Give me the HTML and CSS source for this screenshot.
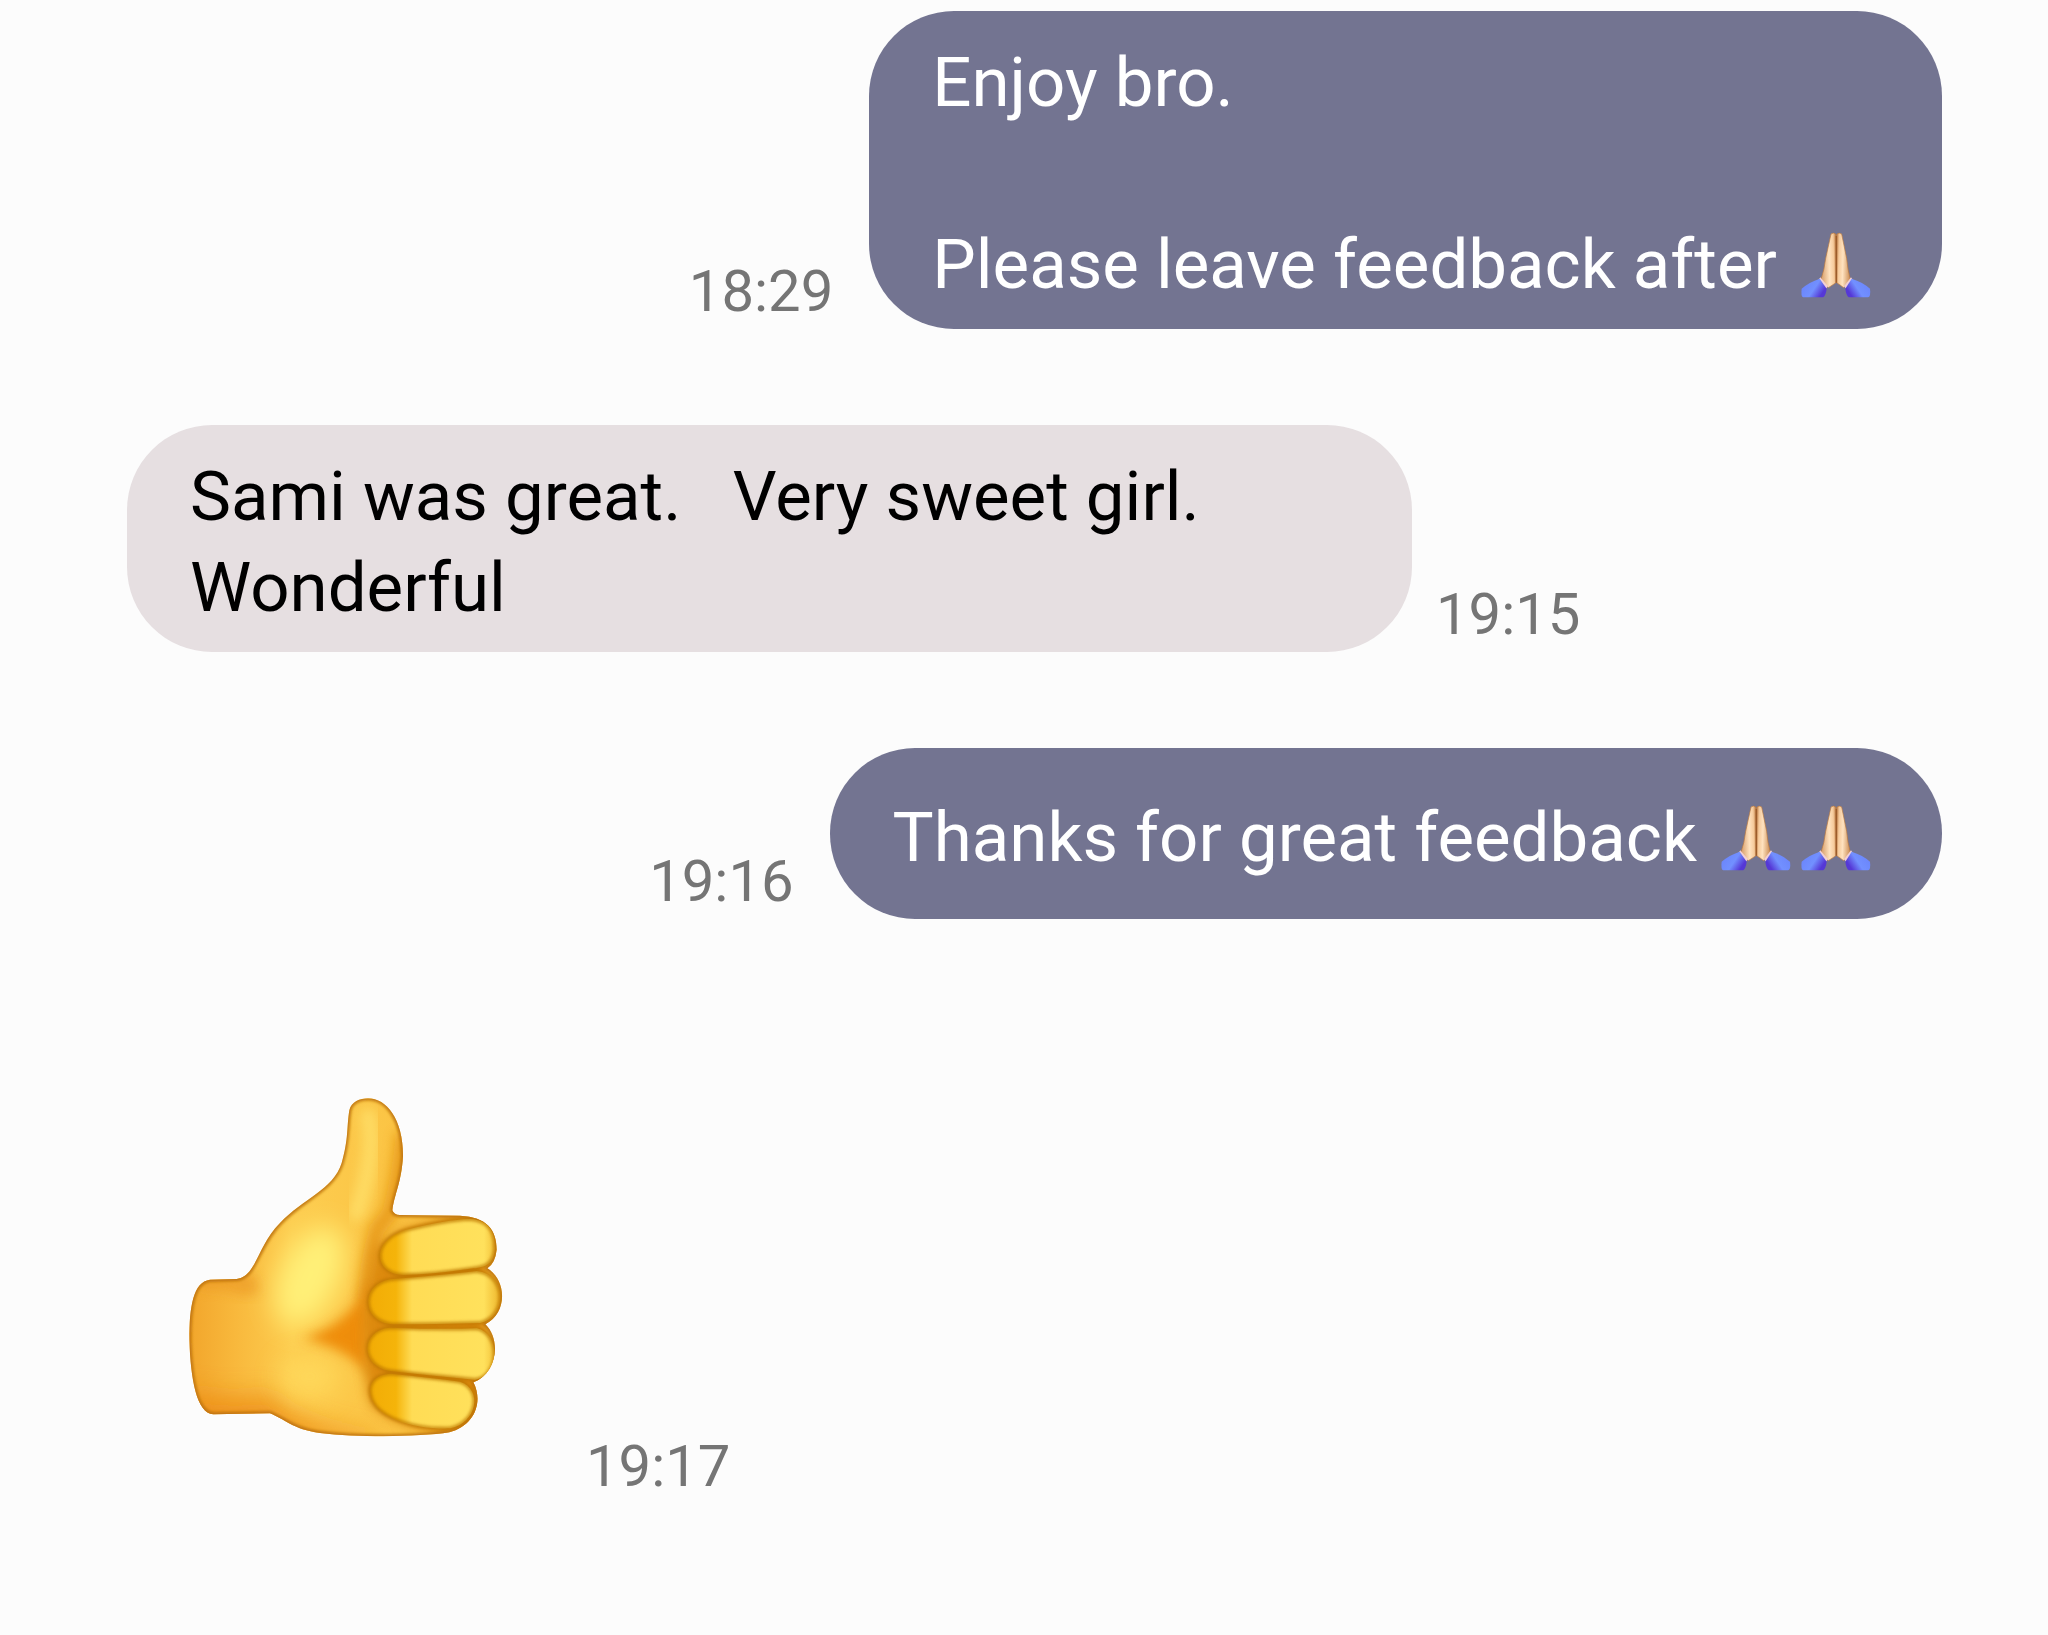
FILE: index.html
```html
<!DOCTYPE html>
<html lang="en">
<head>
<meta charset="utf-8">
<meta name="viewport" content="width=device-width, initial-scale=1">
<title>Messages</title>
<link rel="stylesheet" href="styles.css">
</head>
<body>
<svg class="defs" aria-hidden="true">
  <defs>
    <linearGradient id="handL" x1="0" x2="1" y1=".1" y2="0">
      <stop offset="0" stop-color="#dba472"/>
      <stop offset=".5" stop-color="#ffe2bf"/>
      <stop offset=".8" stop-color="#f6cb9c"/>
      <stop offset="1" stop-color="#b8743c"/>
    </linearGradient>
    <linearGradient id="handR" x1="1" x2="0" y1=".1" y2="0">
      <stop offset="0" stop-color="#d0955f"/>
      <stop offset=".5" stop-color="#ffe2bf"/>
      <stop offset=".8" stop-color="#f6cb9c"/>
      <stop offset="1" stop-color="#b8743c"/>
    </linearGradient>
    <linearGradient id="cuffL" x1="0" x2="1" y1=".3" y2=".8">
      <stop offset="0" stop-color="#6a84fb"/>
      <stop offset=".5" stop-color="#7290ff"/>
      <stop offset=".85" stop-color="#5538d6"/>
    </linearGradient>
    <linearGradient id="cuffR" x1="1" x2="0" y1=".3" y2=".8">
      <stop offset="0" stop-color="#6a84fb"/>
      <stop offset=".5" stop-color="#7290ff"/>
      <stop offset=".85" stop-color="#5538d6"/>
    </linearGradient>
    <symbol id="pray" viewBox="54 33 240 204">
      <path d="M153 42Q161 36 168 43L168 188Q156 196 145 203L123 178Q133 150 137 115Z" fill="url(#handL)" stroke="#b87940" stroke-width="2"/>
      <path d="M185 42Q177 36 170 43L170 188Q182 196 191 203L211 178Q203 150 200 115Z" fill="url(#handR)" stroke="#b87940" stroke-width="2"/>
      <path d="M169 48V188" stroke="#9c5c2b" stroke-width="4"/>
      <path d="M121 172L144 199L137 207L115 180ZM213 172L192 199L199 207L219 180Z" fill="#f1cfd6"/>
      <path d="M119 176L140 206Q138 224 130 232H70Q62 230 65 206Q88 186 119 176Z" fill="url(#cuffL)"/>
      <path d="M215 176L196 206Q198 224 206 232H264Q273 230 270 206Q248 186 215 176Z" fill="url(#cuffR)"/>
    </symbol>
  </defs>
</svg>

<main class="thread">
  <article class="row sent">
    <time class="time">18:29</time>
    <p class="bubble">Enjoy bro.

Please leave feedback after <span class="emojis"><svg class="emoji" role="img" aria-label="Folded hands"><use href="#pray"/></svg></span></p>
  </article>

  <article class="row received">
    <p class="bubble">Sami was great.   Very sweet girl. Wonderful</p>
    <time class="time">19:15</time>
  </article>

  <article class="row sent">
    <time class="time">19:16</time>
    <p class="bubble">Thanks for great feedback <span class="emojis"><svg class="emoji" role="img" aria-label="Folded hands"><use href="#pray"/></svg><svg class="emoji" role="img" aria-label="Folded hands"><use href="#pray"/></svg></span></p>
  </article>

  <article class="row received">
    <svg class="sticker" viewBox="0 0 1140 1200" role="img" aria-label="Thumbs up">
      <defs>
        <filter id="b6" x="-20%" y="-20%" width="140%" height="140%"><feGaussianBlur stdDeviation="5"/></filter>
        <filter id="b12" x="-50%" y="-30%" width="200%" height="160%"><feGaussianBlur stdDeviation="18"/></filter>
        <filter id="b30" x="-80%" y="-80%" width="260%" height="260%"><feGaussianBlur stdDeviation="40"/></filter>
        <linearGradient id="skin" x1="90" x2="700" y1="0" y2="0" gradientUnits="userSpaceOnUse">
          <stop offset="0" stop-color="#f2a62c"/>
          <stop offset=".22" stop-color="#f8b83c"/>
          <stop offset=".5" stop-color="#fdcd50"/>
          <stop offset="1" stop-color="#fbc444"/>
        </linearGradient>
        <linearGradient id="finger" x1="620" x2="1020" y1="0" y2="0" gradientUnits="userSpaceOnUse">
          <stop offset="0" stop-color="#f2ab05"/>
          <stop offset=".22" stop-color="#f5b40a"/>
          <stop offset=".34" stop-color="#ffdc55"/>
          <stop offset=".88" stop-color="#ffe15c"/>
          <stop offset="1" stop-color="#eeb62c"/>
        </linearGradient>
        <path id="palm" d="M624 76C680 76 730 140 729 250C724 330 704 360 697 412Q702 426 720 426L900 428C980 432 1010 470 1010 530Q1006 570 982 586C1040 620 1044 720 976 754C1024 800 1012 900 940 928C972 990 940 1060 868 1078C780 1092 600 1094 480 1080C400 1070 370 1036 330 1021L160 1024C110 1020 92 920 88 800C88 700 100 626 150 620L230 618C290 610 290 520 360 450C430 376 520 350 545 270C566 200 560 160 568 112C574 86 600 76 624 76Z"/>
        <clipPath id="palmClip"><use href="#palm"/></clipPath>
        <path id="f1" d="M740 470Q860 440 930 438C990 442 1006 480 1004 530C1000 570 980 582 940 586Q820 604 730 606C640 604 630 500 740 470Z"/>
        <path id="f2" d="M700 618Q850 606 950 594C1040 604 1044 730 960 750Q820 754 700 754C600 748 600 626 700 618Z"/>
        <path id="f3" d="M690 764Q850 770 950 766C1022 780 1022 910 945 920Q810 908 690 894C600 878 600 772 690 764Z"/>
        <path id="f4" d="M690 902Q800 912 900 926C970 950 950 1050 870 1066C780 1070 630 1040 630 950Q634 908 690 902Z"/>
      </defs>
      <use href="#palm" fill="url(#skin)"/>
      <g clip-path="url(#palmClip)">
        <path d="M60 950Q220 990 330 960Q420 1060 640 1090L640 1130H60Z" fill="#ec8a12" opacity=".8" filter="url(#b30)"/>
        <path d="M120 600H260Q300 600 300 660L250 670Q180 640 120 650Z" fill="#ea9520" opacity=".6" filter="url(#b12)"/>
        <ellipse cx="450" cy="610" rx="90" ry="160" transform="rotate(25 450 610)" fill="#fff078" filter="url(#b30)"/>
        <ellipse cx="450" cy="910" rx="90" ry="60" fill="#ffdc5e" opacity=".8" filter="url(#b30)"/>
        <path d="M625 130Q650 240 590 420" fill="none" stroke="#ffe470" stroke-width="50" stroke-linecap="round" opacity=".7" filter="url(#b12)"/>
        <path d="M730 180Q722 300 690 420L650 470Q620 580 616 680" fill="none" stroke="#e38f0d" stroke-width="46" opacity=".75" filter="url(#b12)"/>
        <path d="M430 795Q560 760 620 640V900Q570 830 430 795Z" fill="#ec8300" opacity=".85" filter="url(#b12)"/>
        <path d="M680 425H900L730 470L650 520L630 620L608 700L612 890L630 990Q700 1060 860 1085H980V430Z" fill="#d47a00" opacity=".8" filter="url(#b12)"/>
        <use href="#palm" fill="none" stroke="#bd720f" stroke-width="12" filter="url(#b6)"/>
        <g fill="url(#finger)">
          <use href="#f1"/><use href="#f2"/><use href="#f3"/><use href="#f4"/>
        </g>
        <g fill="none" stroke="#bd7703" stroke-width="10" opacity=".8" filter="url(#b6)">
          <use href="#f1"/><use href="#f2"/><use href="#f3"/><use href="#f4"/>
        </g>
      </g>
    </svg>
    <time class="time">19:17</time>
  </article>
</main>
</body>
</html>
```
FILE: styles.css
```css
* {
  box-sizing: border-box;
}

body {
  margin: 0;
  background: #fcfcfc;
  color: #000;
  font-family: Roboto, "Liberation Sans", sans-serif;
}

.defs {
  display: block;
  width: 0;
  height: 0;
}

.thread {
  display: flex;
  flex-direction: column;
  gap: 96px;
  padding: 11px 106px 131px 127px;
}

.row {
  display: flex;
  align-items: flex-end;
}

.sent {
  justify-content: flex-end;
  gap: 36px;
}

.received {
  gap: 24px;
}

.bubble {
  display: flow-root;
  align-content: center;
  max-width: 1285px;
  min-height: 171px;
  margin: 0;
  padding: 26px 64px 19px 63px;
  border-radius: 85px;
  background: #e6dfe1;
  font-size: 69px;
  line-height: 91px;
  white-space: pre-wrap;
}

.sent .bubble {
  background: #737491;
  color: #fff;
}

.time {
  color: #757575;
  font-size: 58px;
  line-height: 76px;
}

.emojis {
  margin-left: 4px;
}

.emoji {
  width: 80px;
  height: 68px;
  vertical-align: -11px;
}

.sticker {
  width: 380px;
  height: 400px;
  margin: 58px 22px 31px 33px;
}
```
